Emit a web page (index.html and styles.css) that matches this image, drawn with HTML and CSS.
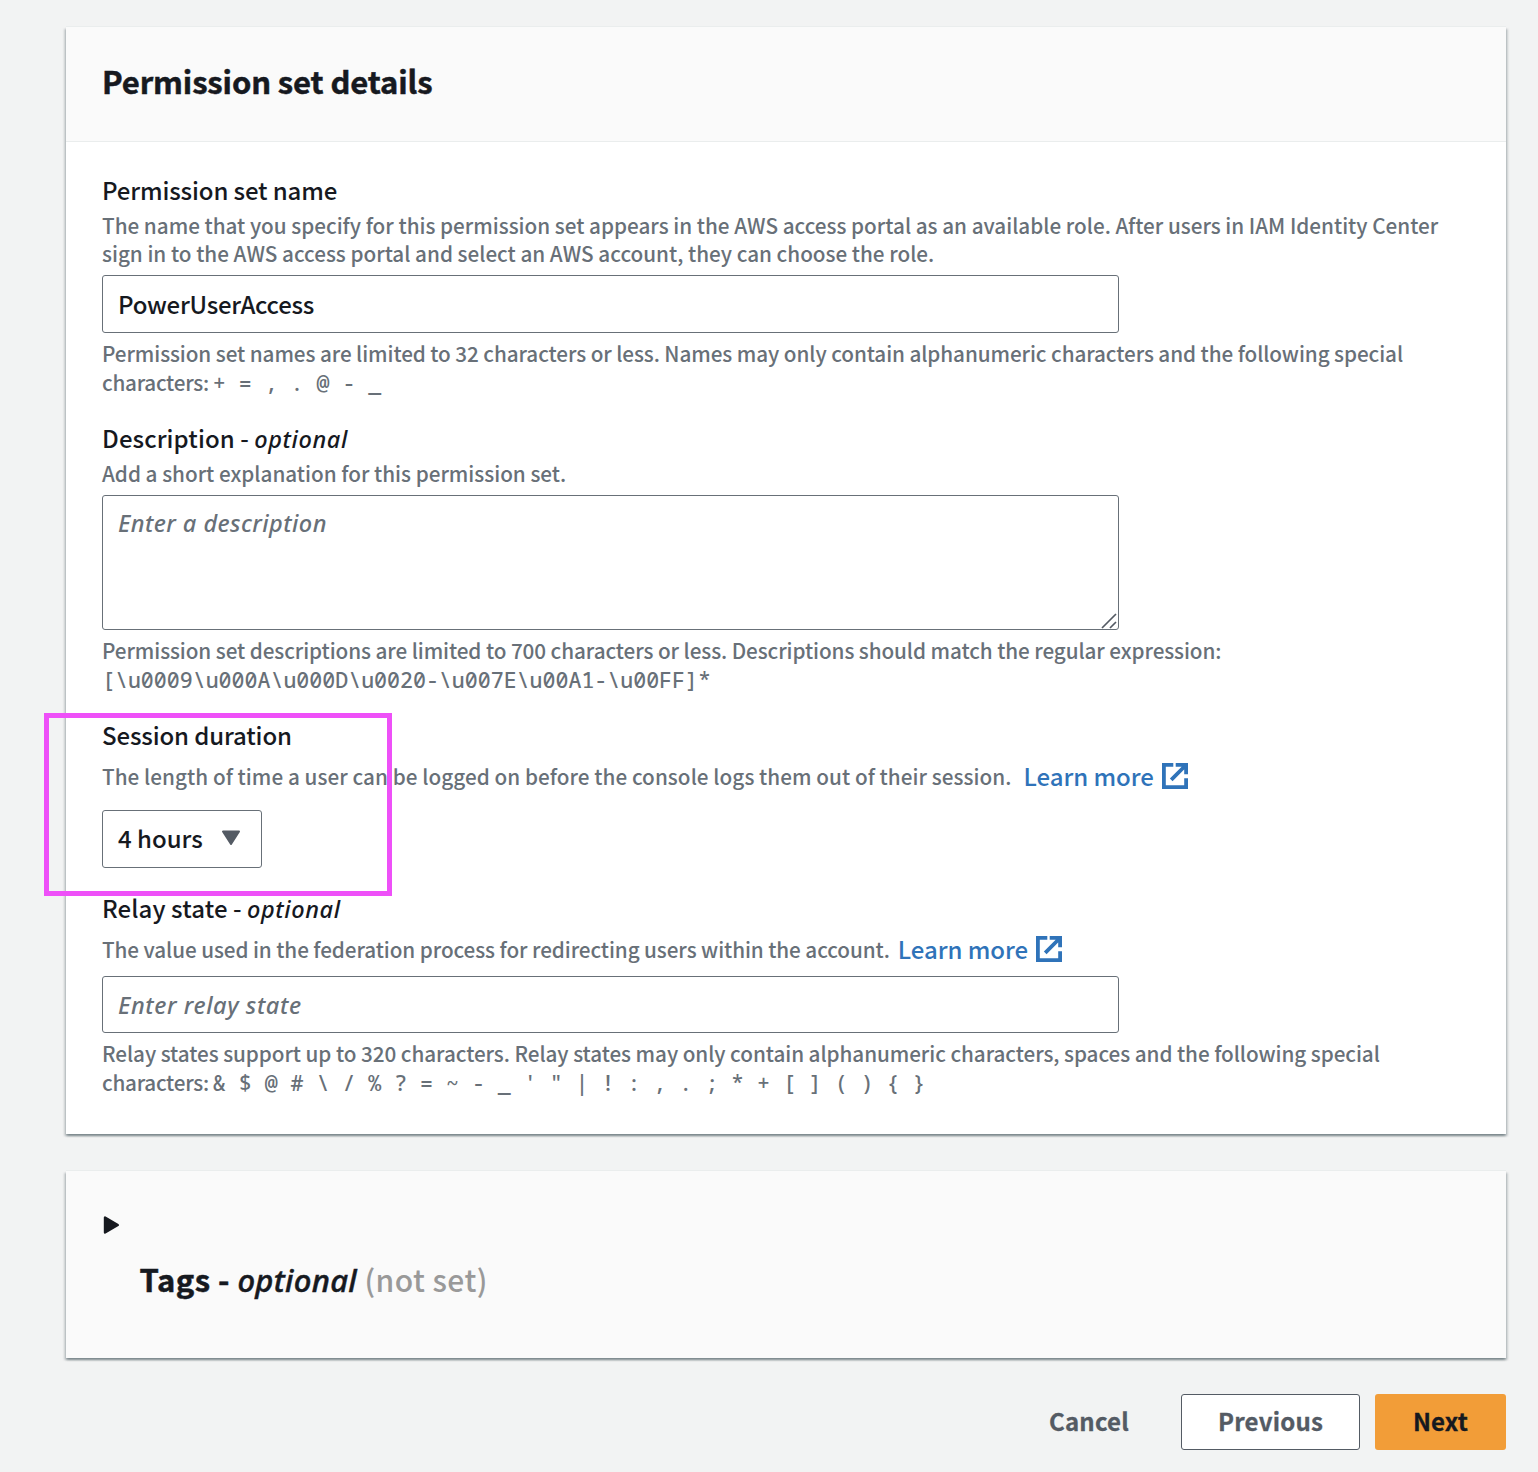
FILE: index.html
```html
<!DOCTYPE html>
<html lang="en">
<head>
<meta charset="utf-8">
<title>Permission set details</title>
<link rel="stylesheet" href="styles.css">
</head>
<body>
<svg class="defs" width="0" height="0"><symbol id="external" viewBox="0 0 26 26"><path d="M11.3 1.9H1.9V24.1H24.1V15.3M13.7 1.9H24.1V11.3M9.2 16.8L23.5 2.5" fill="none" stroke="currentColor" stroke-width="3.8"/></symbol></svg>
<main class="page">
  <section class="card">
    <header class="card-header"><h2>Permission set details</h2></header>
    <div class="card-body">
      <div class="field">
        <label class="label name-label">Permission set name</label>
        <p class="hint">The name that you specify for this permission set appears in the AWS access portal as an available role. After users in IAM Identity Center<br>sign in to the AWS access portal and select an AWS account, they can choose the role.</p>
        <input class="control name-input" type="text" value="PowerUserAccess">
        <p class="constraint"><span class="snug">Permission set names are limited to 32 characters or less. Names may only contain alphanumeric characters and the following special</span><br><span class="lead">characters:</span><code>+ = , . @ - _</code></p>
      </div>
      <div class="field description">
        <label class="label"><span class="wide">Description -</span> <i>optional</i></label>
        <p class="hint">Add a short explanation for this permission set.</p>
        <div class="area-wrap">
          <textarea class="control area" placeholder="Enter a description"></textarea>
          <svg class="grip" viewBox="0 0 16 16"><path d="M1 15L15 1M9 15L15 9" stroke="#545b64" stroke-width="1.7" fill="none"/></svg>
        </div>
        <p class="constraint"><span class="snug">Permission set descriptions are limited to 700 characters or less. Descriptions should match the regular expression:</span><br><code>[\u0009\u000A\u000D\u0020-\u007E\u00A1-\u00FF]*</code></p>
      </div>
      <div class="field session">
        <label class="label">Session duration</label>
        <p class="hint with-link"><span class="loose">The length of time a user can be logged on before the console logs them out of their session.</span><a class="link far">Learn more <svg class="ext"><use href="#external"/></svg></a></p>
        <button class="control select">4 hours <svg class="caret" viewBox="0 0 20 16"><path d="M2 1.5H18L10 14Z" fill="#545b64" stroke="#545b64" stroke-width="2" stroke-linejoin="round"/></svg></button>
        <div class="highlight"></div>
      </div>
      <div class="field relay">
        <label class="label"><span class="wide">Relay state -</span> <i>optional</i></label>
        <p class="hint with-link"><span class="snug">The value used in the federation process for redirecting users within the account.</span><a class="link">Learn more <svg class="ext"><use href="#external"/></svg></a></p>
        <input class="control relay-input" type="text" placeholder="Enter relay state">
        <p class="constraint"><span class="snug-less">Relay states support up to 320 characters. Relay states may only contain alphanumeric characters, spaces and the following special</span><br><span class="lead">characters:</span><code>&amp; $ @ # \ / % ? = ~ - _ ' " | ! : , . ; * + [ ] ( ) { }</code></p>
      </div>
    </div>
  </section>
  <section class="card tags">
    <svg class="arrow" viewBox="0 0 17 20"><path d="M2 2.5V17.5L14.8 10Z" fill="#16191f" stroke="#16191f" stroke-width="2.4" stroke-linejoin="round"/></svg>
    <h2>Tags - <i>optional</i> <span class="unset">(not set)</span></h2>
  </section>
  <footer class="actions">
    <button class="btn cancel">Cancel</button>
    <button class="btn previous">Previous</button>
    <button class="btn next">Next</button>
  </footer>
</main>
</body>
</html>
```
FILE: styles.css
```css
* { box-sizing: border-box; }
body {
  margin: 0;
  background: #f2f3f3;
  color: #16191f;
  font: 500 24px/30px "Noto Sans CJK SC", "Noto Sans", sans-serif;
}
h2, p { margin: 0; }
h2 { -webkit-text-stroke: .5px currentColor; }
i {
  font-family: "Noto Sans", sans-serif;
  font-size: 23.5px;
  font-style: italic;
  letter-spacing: .6px;
}
.defs { display: block; }
.page { padding: 27px 32px 22px 66px; }
.card {
  background: #fff;
  box-shadow: 0 -1px 0 #eaeded, 0 2px 2px rgba(0, 28, 36, .3), 2px 2px 2px rgba(0, 28, 36, .15), -2px 2px 2px rgba(0, 28, 36, .15);
}
.card-header {
  height: 115px;
  padding: 34px 36px;
  background: #fafafa;
  border-bottom: 1px solid #eaeded;
}
.card-header h2 { font-size: 31px; line-height: 40px; letter-spacing: -.12px; }
.card-body { height: 992px; padding: 33px 36px 0; }
.field { display: flex; flex-direction: column; align-items: flex-start; }
.label { height: 30px; letter-spacing: -.13px; white-space: pre; }
.name-label { margin-bottom: 6px; }
.hint, .constraint {
  color: #687078;
  font-size: 20.7px;
  line-height: 28px;
  white-space: nowrap;
}
.constraint { line-height: 29px; margin-top: 6px; }
.snug { letter-spacing: -.075px; }
.snug-less { letter-spacing: -.055px; }
.loose { letter-spacing: .06px; }
.wide { letter-spacing: .1px; }
.lead { letter-spacing: -.26px; margin-right: 4px; }
code { font: 500 21.6px/29px "Noto Sans Mono", "DejaVu Sans Mono", monospace; vertical-align: top; }
.control {
  width: 1017px;
  height: 58px;
  margin: 0;
  padding: 0 15px 2px;
  border: 1px solid #687078;
  border-radius: 3px;
  background: #fff;
  color: #16191f;
  font: inherit;
  letter-spacing: -.25px;
  outline: 0;
}
.name-input { margin-top: 8px; }
.control::placeholder {
  color: #687078;
  opacity: 1;
  font-family: "Noto Sans", sans-serif;
  font-size: 23.5px;
  font-style: italic;
  letter-spacing: .45px;
}
.description { margin-top: 26px; }
.description .hint { margin-top: 6px; }
.area-wrap { position: relative; margin-top: 8px; height: 135px; }
.area { display: block; height: 135px; padding-top: 12px; resize: none; }
.grip { position: absolute; right: 2px; bottom: 1px; width: 16px; height: 16px; }
.session { margin-top: 26px; position: relative; }
.with-link { display: flex; align-items: center; margin-top: 12px; }
.link {
  display: flex;
  align-items: center;
  margin: -1px 0 0 8px;
  color: #2f73b9;
  font-size: 24px;
  letter-spacing: -.05px;
}
.far { margin-left: 12px; }
.ext { width: 26px; height: 26px; margin: 0 0 0 8px; }
.select {
  display: flex;
  align-items: center;
  width: 160px;
  margin-top: 20px;
  letter-spacing: 0;
}
.caret { width: 20px; height: 16px; margin-left: 18px; }
.highlight {
  position: absolute;
  left: -58px;
  top: -7px;
  width: 348px;
  height: 183px;
  border: 5px solid #ee50f8;
}
.relay { margin-top: 25px; }
.relay-input { height: 57px; margin-top: 13px; }
.relay-input::placeholder { letter-spacing: .6px; }
.tags { height: 187px; margin-top: 37px; padding: 44px 36px 0 37px; background: #fafafa; }
.arrow { display: block; width: 17px; height: 20px; }
.tags h2 {
  margin: 24px 0 0 36.5px;
  font-size: 31px;
  line-height: 40px;
  letter-spacing: .45px;
}
.tags i { font-size: 31px; font-weight: 500; letter-spacing: .3px; }
.unset { color: #999; font-size: 30px; font-weight: 500; -webkit-text-stroke: 0; }
.actions { display: flex; justify-content: flex-end; margin-top: 36px; }
.btn {
  height: 56px;
  padding: 0 0 2px;
  border: 0;
  border-radius: 3px;
  background: none;
  color: #545b64;
  font: inherit;
  font-weight: 700;
  letter-spacing: .2px;
  -webkit-text-stroke: .3px currentColor;
}
.cancel { width: 80px; margin-right: 52px; }
.previous { width: 179px; margin-right: 15px; border: 1px solid #545b64; background: #fff; }
.next { width: 131px; background: #f29d38; color: #16191f; }
```
